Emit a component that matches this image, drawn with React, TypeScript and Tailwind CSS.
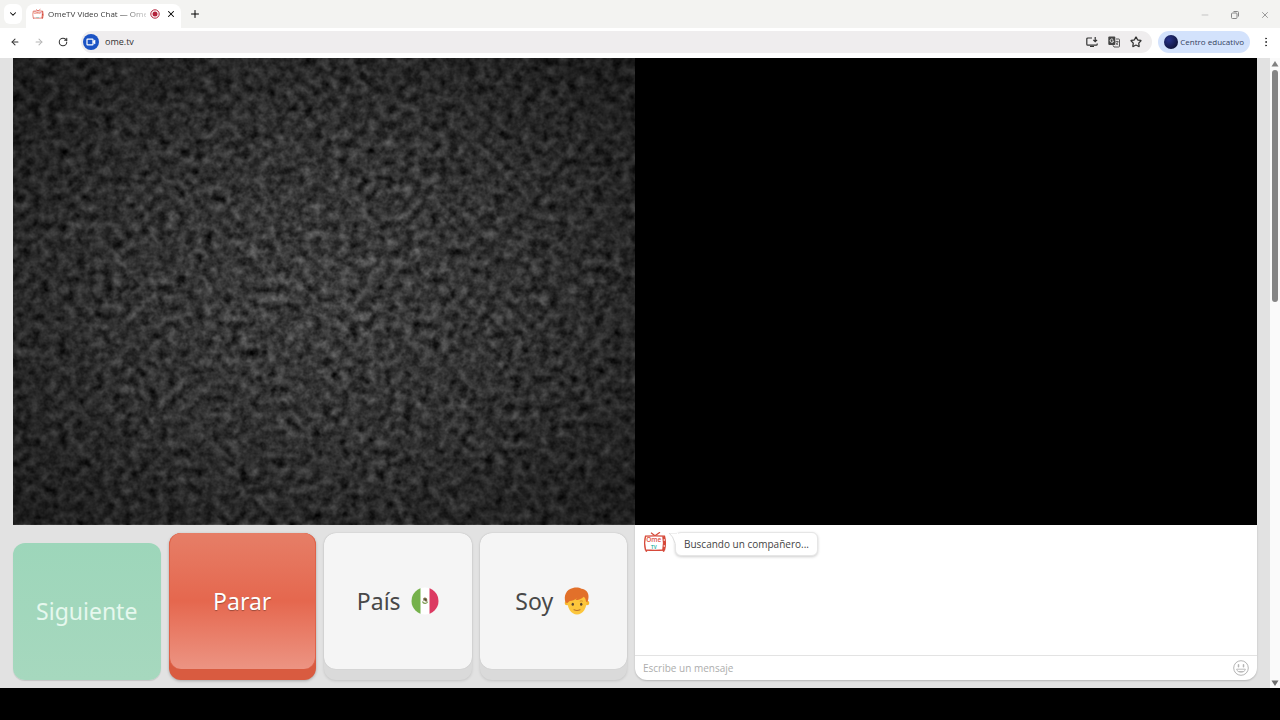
import { useState } from 'react';
import type { ReactNode } from 'react';
import { ArrowLeft, ArrowRight, ChevronDown, EllipsisVertical, Minus, Plus, RotateCw, Star, X } from 'lucide-react';

// Red TV set used for the favicon and the chat avatar
function TvLogo({ className }: { className: string }) {
  return (
    <svg className={className} viewBox="0 0 24 20" fill="none" aria-hidden="true">
      <path d="M8 .8l4 3 5-3.600" stroke="#d6493a" strokeWidth="1.2" />
      <path d="M4 18l-1 1.6M20 18l1 1.6" stroke="#d6493a" strokeWidth="1.6" />
      <path d="M2.500 4.200Q12 3.400 21.500 4.200Q23.300 11 21.500 18Q12 18.800 2.500 18Q.7 11 2.500 4.200Z" fill="#fff" stroke="#d6493a" strokeWidth="1.3" />
      <path d="M19.200 4.200l2.300.2Q23.400 11 21.500 17.900l-2.300.2Q20.600 11 19.200 4.200Z" fill="#d6493a" />
      <circle cx="21.300" cy="8" r=".8" fill="#fff" />
      <circle cx="21.300" cy="14" r=".8" fill="#fff" />
      <text x="10.800" y="10.200" fontSize="6.500" fontWeight="600" textAnchor="middle" fill="#e05246" fontFamily="Open Sans, sans-serif">
        Ome
      </text>
      <text x="10.800" y="17.200" fontSize="4.500" fontWeight="700" textAnchor="middle" fill="#35b6a4" fontFamily="Open Sans, sans-serif">
        TV
      </text>
    </svg>
  );
}

function MexicoFlag() {
  return (
    <svg className="h-7 w-7" viewBox="0 0 28 28" aria-hidden="true">
      <clipPath id="flag-round">
        <circle cx="14" cy="14" r="13.500" />
      </clipPath>
      <g clipPath="url(#flag-round)">
        <rect width="28" height="28" fill="#fff" />
        <rect width="9.500" height="28" fill="#75b14b" />
        <rect x="18.500" width="9.500" height="28" fill="#dc3a62" />
      </g>
      <path d="M12.300 11.200c1.500-1.400 4-.4 4 1.700 0 1-.6 1.700-1.300 2.100l-1.200-1.500-1.500.3z" fill="#7d6b45" />
      <path d="M11.500 14.500c.6 2.300 4.400 2.600 5.200.2" fill="none" stroke="#7b9a4f" strokeWidth="1.100" />
      <circle cx="14.300" cy="12.800" r=".8" fill="#3f4a3c" />
    </svg>
  );
}

function BoyFace() {
  return (
    <svg className="h-7 w-7" viewBox="0 0 28 28" aria-hidden="true">
      <circle cx="4" cy="16" r="2.300" fill="#f8b62d" />
      <circle cx="24" cy="16" r="2.300" fill="#f8b62d" />
      <path d="M4 12c0-6 4-9 10-9s10 3 10 9c0 9-4 15.500-10 15.500S4 21 4 12z" fill="#fcc63c" />
      <path d="M2.600 15.500C.2 8.500 3.500 2.200 10 .9c3.500-.8 6.500-.3 8.500.8 4 .5 6.800 3.300 7 7.300.1 2.500-.4 4.500-1.300 6.300l-1.200-.8c-.1-2-.8-3.600-2.200-4.800-2.300 2.300-5.200 3.300-8.300 3.400l1.500-1.800c-2.300 1.700-4.700 2.500-7.300 2.700L4.400 16z" fill="#e2702a" />
      <ellipse cx="9.800" cy="17.200" rx="1.200" ry="1.500" fill="#5a4530" />
      <ellipse cx="18.200" cy="17.200" rx="1.200" ry="1.500" fill="#5a4530" />
      <path d="M16.800 14.300q1.500-1 3 0" stroke="#d08a2c" strokeWidth=".9" fill="none" />
      <path d="M11 22.800q3 1.500 6 0" stroke="#b9722b" strokeWidth="1.100" fill="none" strokeLinecap="round" />
    </svg>
  );
}

function SmileIcon() {
  return (
    <svg className="h-4 w-4" viewBox="0 0 16 16" fill="none" stroke="#b5b5b5" aria-hidden="true">
      <circle cx="8" cy="8" r="7.300" strokeWidth="1" />
      <path d="M5.500 4.700v2M10.500 4.700v2" strokeWidth="1.500" strokeLinecap="round" />
      <path d="M3.600 9.200h8.800c-.5 4-8.300 4-8.800 0z" strokeWidth=".9" />
      <path d="M5.500 11.500h5" strokeWidth=".9" />
    </svg>
  );
}

// TV static shown while no partner is connected
function StaticNoise() {
  return (
    <svg className="block h-full w-full" aria-hidden="true">
      <filter id="static" x="0" y="0" width="100%" height="100%" colorInterpolationFilters="sRGB">
        <feTurbulence type="fractalNoise" baseFrequency="0.11" numOctaves="3" seed="12" />
        <feColorMatrix values="0.350 0.350 0 0 -0.110  0.350 0.350 0 0 -0.110  0.350 0.350 0 0 -0.110  0 0 0 0 1" />
      </filter>
      <radialGradient id="vignette" cx="50%" cy="50%" r="65%">
        <stop offset="0" stopColor="#000" stopOpacity="0" />
        <stop offset="0.500" stopColor="#000" stopOpacity="0.200" />
        <stop offset="1" stopColor="#000" stopOpacity="0.500" />
      </radialGradient>
      <rect width="100%" height="100%" filter="url(#static)" />
      <rect width="100%" height="100%" fill="url(#vignette)" />
    </svg>
  );
}

function TabStrip() {
  return (
    <div className="flex h-7 items-end bg-[#f3f3f1] pl-1">
      <button aria-label="Buscar pestañas" className="mb-1 flex h-5 w-[18px] items-center justify-center rounded-md bg-white">
        <ChevronDown className="h-2.5 w-2.5" strokeWidth={2.500} />
      </button>
      <div className="ml-1 flex h-6 w-[155px] items-center rounded-t-lg bg-white pb-1 pl-1.5">
        <TvLogo className="h-3 w-3 shrink-0" />
        <span className="ml-1 w-[98px] bg-gradient-to-r from-[#333] from-75% to-[#ccc] bg-clip-text text-[8px] whitespace-nowrap text-transparent">
          OmeTV Video Chat — Ome
        </span>
        <svg className="ml-1 h-2.5 w-2.5 shrink-0" viewBox="0 0 10 10" aria-hidden="true">
          <circle cx="5" cy="5" r="4.200" fill="none" stroke="#b3203a" />
          <circle cx="5" cy="5" r="2.500" fill="#b3203a" />
        </svg>
        <button aria-label="Cerrar pestaña" className="ml-1.5">
          <X className="h-2.5 w-2.5" strokeWidth={2.500} />
        </button>
      </div>
      <button aria-label="Nueva pestaña" className="mb-2 ml-2">
        <Plus className="h-3 w-3" strokeWidth={2} />
      </button>
      <div className="mb-2 ml-auto flex items-center gap-5 pr-2.5 text-[#888]">
        <button aria-label="Minimizar">
          <Minus className="h-2.5 w-2.5 text-[#bbb]" strokeWidth={2} />
        </button>
        <button aria-label="Restaurar">
          <svg className="h-2.5 w-2.5" viewBox="0 0 10 10" fill="none" stroke="currentColor" aria-hidden="true">
            <rect x="1.500" y="3" width="5.500" height="5.500" rx="1" />
            <path d="M3.500 1.500h4a1 1 0 011 1v4" />
          </svg>
        </button>
        <button aria-label="Cerrar">
          <X className="h-2.5 w-2.5" strokeWidth={2} />
        </button>
      </div>
    </div>
  );
}

function AddressBar() {
  return (
    <div className="flex h-[30px] items-center bg-white pr-2 pb-[3px] pl-2.5 text-[#333]">
      <div className="flex w-[71px] shrink-0 items-center gap-3.5">
        <button aria-label="Atrás">
          <ArrowLeft className="h-2.5 w-2.5" strokeWidth={2.500} />
        </button>
        <button aria-label="Adelante" className="text-[#b5b5b5]">
          <ArrowRight className="h-2.5 w-2.5" strokeWidth={2.500} />
        </button>
        <button aria-label="Recargar">
          <RotateCw className="h-2.5 w-2.5" strokeWidth={2.500} />
        </button>
      </div>
      <div className="flex h-[22px] flex-1 items-center rounded-full bg-[#efedee] pr-2.5 pl-0.5">
        <span className="flex h-4 w-4 shrink-0 items-center justify-center rounded-full bg-[#1b53c4]">
          <svg className="h-2.5 w-2.5" viewBox="0 0 10 10" fill="none" stroke="#fff" strokeWidth="1.200" aria-hidden="true">
            <rect x="1" y="2.200" width="6" height="5.600" rx="0.600" />
            <path d="M7.300 4.200L9 3v4L7.300 5.800z" fill="#fff" strokeWidth="0.600" />
          </svg>
        </span>
        <input aria-label="Dirección" defaultValue="ome.tv" className="ml-1.5 h-4 min-w-0 flex-1 bg-transparent text-[9px] text-[#333] outline-none" />
        <div className="flex items-center gap-2.5">
          <button aria-label="Instalar">
            <svg className="h-3 w-3" viewBox="0 0 12 12" fill="none" stroke="currentColor" strokeWidth="1.200" aria-hidden="true">
              <path d="M6 2H1.800a1 1 0 00-1 1v5.200a1 1 0 001 1h8.400a1 1 0 001-1V7.500M4 10.500h4" />
              <path d="M9.200 1v4.500M7.300 3.800l1.900 1.900 1.900-1.900" />
            </svg>
          </button>
          <button aria-label="Traducir">
            <svg className="h-3 w-3" viewBox="0 0 12 12" aria-hidden="true">
              <rect x="0.300" y="0.500" width="7" height="8.500" rx="1" fill="#444" />
              <path d="M5.200 3.700A1.700 1.700 0 105.500 5H4" fill="none" stroke="#fff" strokeWidth=".8" />
              <path d="M8 3h2.700a.8.800 0 01.8.800v6.400a.8.800 0 01-.8.800H6L5 9.300" fill="none" stroke="#444" strokeWidth=".9" />
              <path d="M7.500 5.600h3M9 4.800v.8M10 5.600c-.2 1.500-1 2.500-2.200 3.300M8 6.600c.5 1 1.200 1.700 2.200 2.300" fill="none" stroke="#444" strokeWidth=".8" />
            </svg>
          </button>
          <button aria-label="Añadir a marcadores">
            <Star className="h-3 w-3" strokeWidth={2.500} />
          </button>
        </div>
      </div>
      <button className="ml-1.5 flex h-[22px] shrink-0 items-center rounded-full bg-[#d3e2fc] pr-1.5 pl-1.5 text-[8px] text-[#33415c]">
        <span className="mr-0.5 h-3.5 w-3.5 rounded-full bg-radial-[at_35%_35%] from-[#28348c] to-[#060920]" />
        Centro educativo
      </button>
      <button aria-label="Menú" className="ml-2.5">
        <EllipsisVertical className="h-3 w-3" strokeWidth={2} />
      </button>
    </div>
  );
}

// Raised key with a darker lip under its face
function LightKey({ children }: { children: ReactNode }) {
  return (
    <button className="rounded-xl bg-[#dadada] pb-[11px] shadow-[0_1px_3px_#0002]">
      <span className="flex h-full items-center justify-center gap-2.5 rounded-xl bg-[#f5f5f5] text-[#484848] shadow-[0_0_1px_#0003]">
        {children}
      </span>
    </button>
  );
}

function Controls() {
  return (
    <div className="grid grid-cols-4 gap-2 pt-2 pr-2 pb-2 font-['Noto_Sans',sans-serif] text-[23px]">
      <button className="mt-2.5 rounded-xl bg-linear-to-b from-[#9dd6ba] to-[#a6d8be] text-[#e6f8ee] shadow-[0_1px_1px_#0002]">
        Siguiente
      </button>
      <button className="rounded-xl bg-[#d95b40] pb-[11px] shadow-[0_1px_3px_#0004]">
        <span className="flex h-full items-center justify-center rounded-xl border-x border-[#df6249] bg-linear-to-b from-[#e67e67] via-[#e5674e] to-[#ec9483] text-white text-shadow-[0_1px_1px_#0005]">
          Parar
        </span>
      </button>
      <LightKey>
        País
        <MexicoFlag />
      </LightKey>
      <LightKey>
        Soy
        <BoyFace />
      </LightKey>
    </div>
  );
}

function Chat() {
  const [message, setMessage] = useState('');

  return (
    <div className="mb-2 flex flex-col rounded-b-xl bg-white shadow-[0_1px_2px_#0003]">
      <div className="flex flex-1 items-start px-2 pt-[7px]">
        <TvLogo className="h-5 w-6" />
        <div className="relative ml-2 h-6 rounded-md border border-[#e6e6e6] bg-white px-2 text-[10px] leading-[22px] text-[#444] shadow-[0_1px_3px_#0003]">
          <svg className="absolute top-0 -left-2 h-3 w-2.5" viewBox="0 0 10 12" aria-hidden="true">
            <path d="M10 0H1q4 3 6 10L10 12z" fill="#fff" />
            <path d="M9 0H1q4 3 6 10" fill="none" stroke="#ddd" />
          </svg>
          Buscando un compañero...
        </div>
      </div>
      <div className="flex h-[25px] items-center border-t border-[#e3e3e3] px-2">
        <input
          aria-label="Mensaje"
          value={message}
          onChange={(e) => setMessage(e.target.value)}
          placeholder="Escribe un mensaje"
          className="min-w-0 flex-1 text-[10px] text-[#444] outline-none placeholder:text-[#adadad]"
        />
        <button aria-label="Emojis">
          <SmileIcon />
        </button>
      </div>
    </div>
  );
}

function Scrollbar() {
  return (
    <div className="flex w-2.5 flex-col items-center bg-[#fafafa] pt-0.5 pb-px" aria-hidden="true">
      <svg className="h-2 w-2" viewBox="0 0 8 8">
        <path d="M4 1l3.500 5.500h-7z" fill="#808080" />
      </svg>
      <div className="mt-0.5 h-[37%] w-1.5 rounded-full bg-[#858585]" />
      <svg className="mt-auto h-2 w-2" viewBox="0 0 8 8">
        <path d="M4 7L.5 1.500h7z" fill="#707070" />
      </svg>
    </div>
  );
}

export default function App() {
  return (
    <div className="flex min-h-screen flex-col bg-black pb-8 font-['Open_Sans','Noto_Sans',sans-serif]">
      <header>
        <TabStrip />
        <AddressBar />
      </header>
      <main className="flex flex-1 bg-[#e2e2e2]">
        <div className="flex flex-1 flex-col pr-[13px] pl-[13px]">
          <div className="grid grid-cols-2">
            <div className="aspect-[4/3] overflow-hidden bg-[#222]">
              <StaticNoise />
            </div>
            <div className="bg-black" />
          </div>
          <div className="grid flex-1 grid-cols-2">
            <Controls />
            <Chat />
          </div>
        </div>
        <Scrollbar />
      </main>
    </div>
  );
}
